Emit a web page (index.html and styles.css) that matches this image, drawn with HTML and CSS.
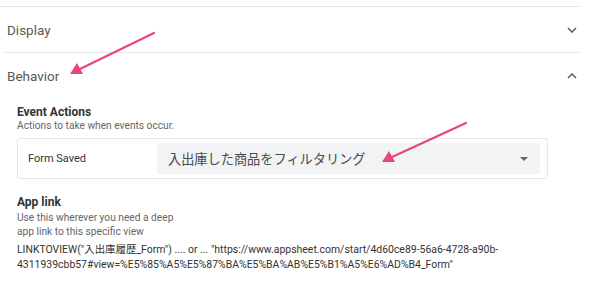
FILE: index.html
```html
<!DOCTYPE html>
<html lang="ja">
<head>
<meta charset="utf-8">
<link rel="stylesheet" href="styles.css">
</head>
<body>
<div class="page">
  <div class="panel">
    <div class="section first">
      <div class="header">
        <span class="title">Display</span>
        <svg class="chev" width="10" height="6" viewBox="0 0 10 6"><path d="M1 1 L5 5 L9 1" fill="none" stroke="#5f6368" stroke-width="1.6"/></svg>
      </div>
    </div>
    <div class="section">
      <div class="header">
        <span class="title">Behavior</span>
        <svg class="chev" width="10" height="6" viewBox="0 0 10 6"><path d="M1 5 L5 1 L9 5" fill="none" stroke="#5f6368" stroke-width="1.6"/></svg>
      </div>
      <div class="details">
        <div class="label">Event Actions</div>
        <div class="hint">Actions to take when events occur.</div>
        <div class="action-box">
          <div class="action-name">Form Saved</div>
          <div class="select">
            <span class="select-text">入出庫した商品をフィルタリング</span>
            <span class="caret"></span>
          </div>
        </div>
        <div class="label applink">App link</div>
        <div class="hint applink-hint">Use this wherever you need a deep<br>app link to this specific view</div>
        <div class="link">LINKTOVIEW("入出庫履歴_Form") .... or ... "https://www.appsheet.com/start/4d60ce89-56a6-4728-a90b-<br>4311939cbb57#view=%E5%85%A5%E5%87%BA%E5%BA%AB%E5%B1%A5%E6%AD%B4_Form"</div>
      </div>
    </div>
  </div>
  <svg class="arrows" width="600" height="285" viewBox="0 0 600 285">
    <line x1="154" y1="33" x2="80" y2="69" stroke="#e8467c" stroke-width="2.2" stroke-linecap="round"/>
    <polygon points="70,74 77,63 83,74" fill="#e8467c"/>
    <line x1="466" y1="123" x2="392" y2="157" stroke="#e8467c" stroke-width="2.2" stroke-linecap="round"/>
    <polygon points="382,162 389,151 395,162" fill="#e8467c"/>
  </svg>
</div>
</body>
</html>
```

FILE: styles.css
```css
html, body {
  margin: 0;
  padding: 0;
  background: #ffffff;
}

body {
  font-family: Roboto, "Noto Sans CJK JP", sans-serif;
  color: #333333;
}

.page {
  position: relative;
  width: 600px;
  height: 285px;
  overflow: hidden;
}

.panel {
  width: 580px;
  padding-top: 6px;
}

.section {
  border-top: 1px solid #e8e8e8;
  margin-left: 4px;
}

.section.first {
  margin-left: 0;
}

.header {
  height: 45px;
  display: flex;
  align-items: center;
  justify-content: space-between;
  padding-left: 3px;
  padding-right: 3px;
}

.section.first .header {
  padding-left: 7px;
}

.title {
  font-size: 13.5px;
  color: #5a5a5a;
}

.chev {
  display: block;
}

.details {
  padding-left: 13px;
  padding-top: 7px;
}

.label {
  font-size: 12px;
  font-weight: 700;
  line-height: 14px;
  color: #333333;
}

.hint {
  font-size: 10.2px;
  line-height: 14px;
  color: #666666;
}

.action-box {
  margin-top: 5px;
  width: 512px;
  border: 1px solid #e6e6e6;
  border-radius: 3px;
  padding: 4px 7px 4px 10px;
  display: flex;
  align-items: center;
}

.action-name {
  width: 129px;
  font-size: 11px;
  color: #333333;
}

.select {
  flex: 1;
  height: 31px;
  background: #f1f3f4;
  border-radius: 3px;
  display: flex;
  align-items: center;
  justify-content: space-between;
  padding: 0 12px 0 11px;
}

.select-text {
  font-family: "Noto Sans CJK JP", sans-serif;
  font-size: 13.2px;
  color: #4a4a4a;
}

.caret {
  width: 0;
  height: 0;
  border-left: 4px solid transparent;
  border-right: 4px solid transparent;
  border-top: 4px solid #666666;
}

.applink {
  margin-top: 16px;
}

.applink-hint {
  margin-top: 2px;
}

.link {
  margin-top: 3px;
  font-size: 10.45px;
  line-height: 15px;
  color: #333333;
  white-space: nowrap;
}

.arrows {
  position: absolute;
  left: 0;
  top: 0;
  pointer-events: none;
}
```
